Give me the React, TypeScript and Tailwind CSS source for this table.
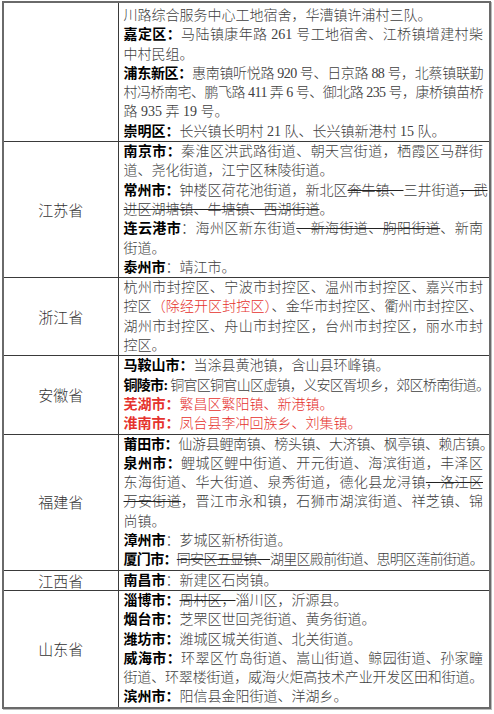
import React from 'react';

// one visual line of the document; j = stretched to the full width
const L: React.FC<{ j?: boolean; tight?: string; children: React.ReactNode }> = ({ j, tight, children }) => (
  <div className={`h-[19.3px] whitespace-nowrap ${j ? 'text-justify [text-align-last:justify]' : ''} ${tight || ''}`}>{children}</div>
);

const B: React.FC<{ children: React.ReactNode; red?: boolean }> = ({ children, red }) => (
  <span className={`font-bold ${red ? 'text-[#e5322d]' : 'text-black'}`}>{children}</span>
);

const S: React.FC<{ children: React.ReactNode }> = ({ children }) => (
  <span className="line-through decoration-[#222]">{children}</span>
);

const R: React.FC<{ children: React.ReactNode }> = ({ children }) => (
  <span className="text-[#e5322d]">{children}</span>
);

const Row: React.FC<{ province?: string; first?: boolean; children: React.ReactNode }> = ({ province, first, children }) => (
  <tr>
    <td className="border-r border-b border-[#3a3a3a] text-center align-middle text-[15px] text-[#333] font-['Noto_Sans_CJK_SC',sans-serif]">
      {province}
    </td>
    <td className={`border-b border-[#3a3a3a] pl-[5px] pr-[6px] ${first ? 'pt-[3px]' : ''}`}>{children}</td>
  </tr>
);

export default function App() {
  return (
    <div className="min-h-[714px] bg-white pt-[1px] pl-[2px]">
      <table
        className="table-fixed w-[489px] border-collapse border-2 border-[#6a6a6a] text-[14px] leading-[19.3px] font-light text-[#404040] font-['Liberation_Serif','Noto_Sans_CJK_SC',serif] shadow-[1px_1px_0_#bbb]"
      >
        <colgroup>
          <col className="w-[115px]" />
          <col />
        </colgroup>
        <tbody>
          <Row first>
            <L>川路综合服务中心工地宿舍，华漕镇许浦村三队。</L>
            <L j><B>嘉定区：</B>马陆镇康年路 261 号工地宿舍、江桥镇增建村柴</L>
            <L>中村民组。</L>
            <L j tight="tracking-[-0.6px]"><B>浦东新区：</B>惠南镇听悦路 920 号、日京路 88 号，北蔡镇联勤</L>
            <L j tight="tracking-[-0.6px]">村冯桥南宅、鹏飞路 411 弄 6 号、御北路 235 号，康桥镇苗桥</L>
            <L>路 935 弄 19 号。</L>
            <L><B>崇明区：</B>长兴镇长明村 21 队、长兴镇新港村 15 队。</L>
          </Row>
          <Row province="江苏省">
            <L j><B>南京市：</B>秦淮区洪武路街道、朝天宫街道，栖霞区马群街</L>
            <L>道、尧化街道，江宁区秣陵街道。</L>
            <L j><B>常州市：</B>钟楼区荷花池街道，新北区<S>奔牛镇、</S>三井街道<S>，武</S></L>
            <L><S>进区湖塘镇、牛塘镇、西湖街道</S>。</L>
            <L j><B>连云港市</B>：海州区新东街道<S>、新海街道、朐阳街道</S>、新南</L>
            <L>街道。</L>
            <L><B>泰州市</B>：靖江市。</L>
          </Row>
          <Row province="浙江省">
            <L j>杭州市封控区、宁波市封控区、温州市封控区、嘉兴市封</L>
            <L j>控区<R>（除经开区封控区）</R>、金华市封控区、衢州市封控区、</L>
            <L j>湖州市封控区、舟山市封控区，台州市封控区，丽水市封</L>
            <L>控区。</L>
          </Row>
          <Row province="安徽省">
            <L><B>马鞍山市：</B>当涂县黄池镇，含山县环峰镇。</L>
            <L j tight="tracking-[-0.7px]"><B>铜陵市:</B> 铜官区铜官山区虚镇，义安区胥坝乡，郊区桥南街道。</L>
            <L><B red>芜湖市：</B><R>繁昌区繁阳镇、新港镇。</R></L>
            <L><B red>淮南市：</B><R>凤台县李冲回族乡、刘集镇。</R></L>
          </Row>
          <Row province="福建省">
            <L j tight="tracking-[-0.3px]"><B>莆田市：</B>仙游县鲤南镇、榜头镇、大济镇、枫亭镇、赖店镇。</L>
            <L j><B>泉州市：</B>鲤城区鲤中街道、开元街道、海滨街道，丰泽区</L>
            <L j>东海街道、华大街道、泉秀街道，德化县龙浔镇<S>，洛江区</S></L>
            <L j><S>万安街道</S>，晋江市永和镇，石狮市湖滨街道、祥芝镇、锦</L>
            <L>尚镇。</L>
            <L><B>漳州市</B>：芗城区新桥街道。</L>
            <L j tight="tracking-[-0.7px]"><B>厦门市：</B><S>同安区五显镇、</S>湖里区殿前街道、思明区莲前街道。</L>
          </Row>
          <Row province="江西省">
            <L><B>南昌市</B>：新建区石岗镇。</L>
          </Row>
          <Row province="山东省">
            <L><B>淄博市：</B><S>周村区，</S>淄川区，沂源县。</L>
            <L><B>烟台市：</B>芝罘区世回尧街道、黄务街道。</L>
            <L><B>潍坊市：</B>潍城区城关街道、北关街道。</L>
            <L j><B>威海市：</B>环翠区竹岛街道、嵩山街道、鲸园街道、孙家疃</L>
            <L j tight="tracking-[-0.3px]">街道、环翠楼街道，威海火炬高技术产业开发区田和街道。</L>
            <L><B>滨州市：</B>阳信县金阳街道、洋湖乡。</L>
          </Row>
        </tbody>
      </table>
    </div>
  );
}
